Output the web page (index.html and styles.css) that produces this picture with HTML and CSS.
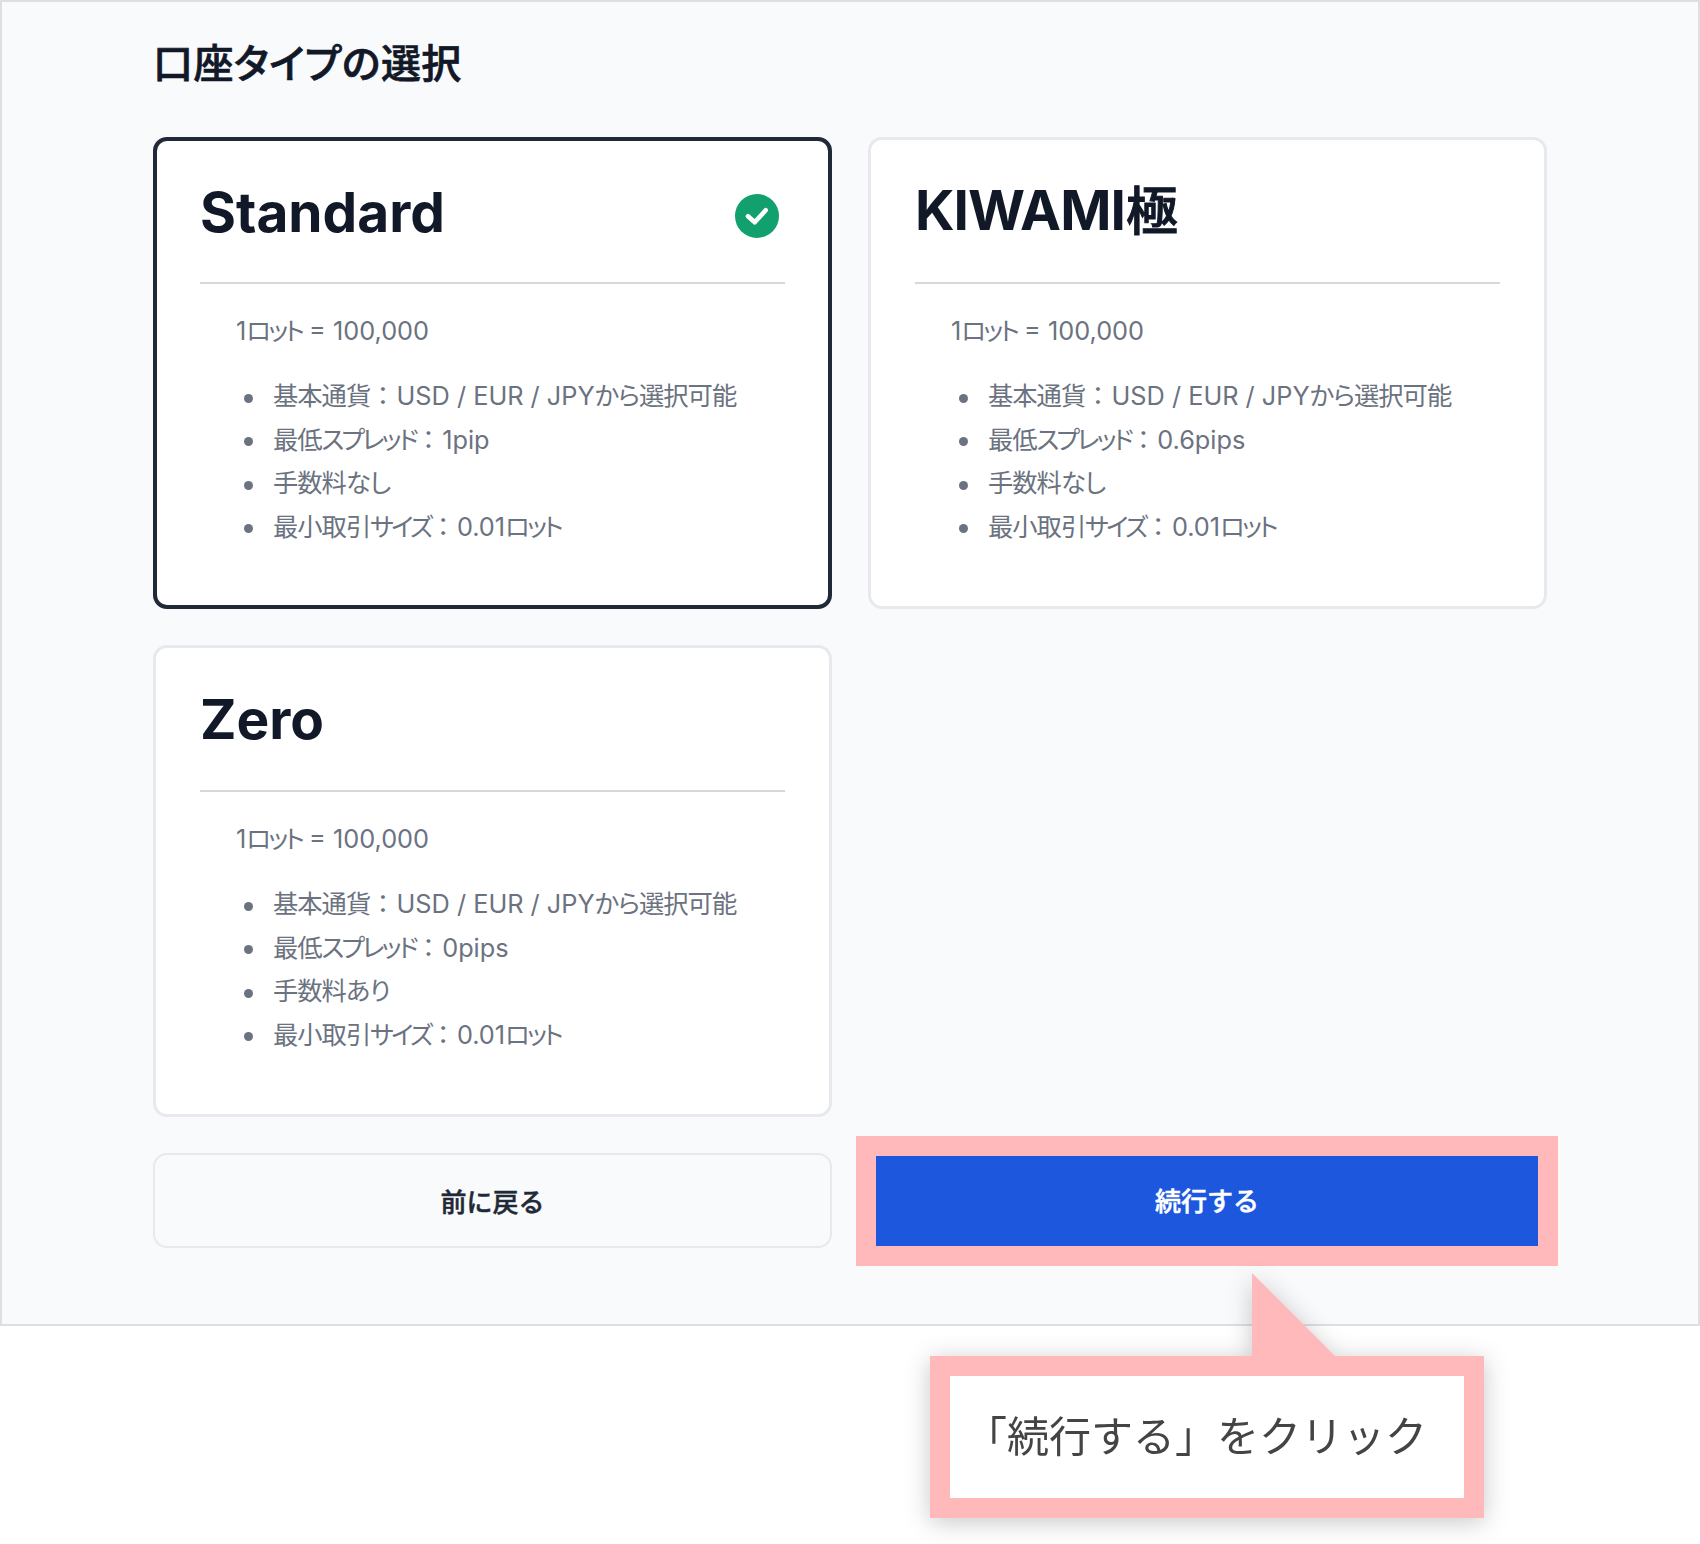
FILE: index.html
```html
<!DOCTYPE html>
<html lang="ja">
<head>
    <meta charset="UTF-8">
    <meta name="viewport" content="width=device-width, initial-scale=1.0">
    <title>口座タイプの選択</title>
    <link rel="stylesheet" href="styles.css">
</head>
<body>
    <div class="panel">
        <h1 class="page-title">口座タイプの選択</h1>

        <div class="card-grid">
            <div class="card selected">
                <div class="card-head">
                    <h2>Standard</h2>
                    <svg class="check" viewBox="0 0 44 44" width="44" height="44">
                        <circle cx="22" cy="22" r="22" fill="#11a06e"/>
                        <path d="M13 22.3L19.7 28.3L30.7 16.3" fill="none" stroke="#fff" stroke-width="4.6" stroke-linecap="round" stroke-linejoin="round"/>
                    </svg>
                </div>
                <p class="lot">1<span class="kana">ロット</span> = 100,000</p>
                <ul class="features">
                    <li><span class="jp">基本通貨</span><span class="colon">：</span>USD / EUR / JPY<span class="jp">から選択可能</span></li>
                    <li><span class="jp">最低</span><span class="kana">スプレッド</span><span class="colon">：</span>1pip</li>
                    <li><span class="jp">手数料なし</span></li>
                    <li><span class="jp">最小取引</span><span class="kana">サイズ</span><span class="colon">：</span>0.01<span class="kana">ロット</span></li>
                </ul>
            </div>

            <div class="card">
                <div class="card-head">
                    <h2 class="kiwami">KIWAMI<span>極</span></h2>
                </div>
                <p class="lot">1<span class="kana">ロット</span> = 100,000</p>
                <ul class="features">
                    <li><span class="jp">基本通貨</span><span class="colon">：</span>USD / EUR / JPY<span class="jp">から選択可能</span></li>
                    <li><span class="jp">最低</span><span class="kana">スプレッド</span><span class="colon">：</span>0.6pips</li>
                    <li><span class="jp">手数料なし</span></li>
                    <li><span class="jp">最小取引</span><span class="kana">サイズ</span><span class="colon">：</span>0.01<span class="kana">ロット</span></li>
                </ul>
            </div>

            <div class="card">
                <div class="card-head">
                    <h2>Zero</h2>
                </div>
                <p class="lot">1<span class="kana">ロット</span> = 100,000</p>
                <ul class="features">
                    <li><span class="jp">基本通貨</span><span class="colon">：</span>USD / EUR / JPY<span class="jp">から選択可能</span></li>
                    <li><span class="jp">最低</span><span class="kana">スプレッド</span><span class="colon">：</span>0pips</li>
                    <li><span class="jp">手数料あり</span></li>
                    <li><span class="jp">最小取引</span><span class="kana">サイズ</span><span class="colon">：</span>0.01<span class="kana">ロット</span></li>
                </ul>
            </div>

            <div class="card-empty"></div>

            <button class="btn back-btn">前に戻る</button>
            <button class="btn next-btn">続行する</button>
        </div>

        <div class="callout">
            <div class="callout-tail"></div>
            <div class="callout-box">「続行する」をクリック</div>
        </div>
    </div>
</body>
</html>
```

FILE: styles.css
```css
* {
    margin: 0;
    padding: 0;
    box-sizing: border-box;
}

body {
    font-family: Inter, "Noto Sans CJK JP", sans-serif;
    background: #fff;
    height: 1544px;
    overflow: hidden;
}

.panel {
    position: relative;
    height: 1326px;
    padding: 35px 151px 0;
    background: #f9fafb;
    border: 2px solid #dedfe1;
}

.page-title {
    height: 54px;
    margin-bottom: 46px;
    font-size: 40px;
    line-height: 54px;
    font-weight: 500;
    color: #111827;
    letter-spacing: 0.4px;
    font-feature-settings: "palt";
    -webkit-text-stroke: 0.7px #111827;
}

.card-grid {
    display: grid;
    grid-template-columns: 679px 679px;
    gap: 36px;
}

.card {
    height: 472px;
    padding: 0 44px;
    background: #fff;
    border: 3px solid #e8e9ec;
    border-radius: 14px;
}

.card.selected {
    padding: 0 43px;
    border: 4px solid #1f2937;
}

.card.selected .card-head {
    height: 143px;
}

.card-head {
    display: flex;
    justify-content: space-between;
    align-items: center;
    height: 144px;
    padding-right: 6px;
    border-bottom: 2px solid #d6d8dc;
}

.card-head h2 {
    font-size: 55px;
    line-height: 68px;
    font-weight: 700;
    color: #111827;
}

.kiwami {
    letter-spacing: -1px;
}

.kiwami span {
    margin-left: 1px;
    font-size: 52px;
    font-weight: 500;
    -webkit-text-stroke: 1px #111827;
}

.check {
    margin-top: 9px;
}

.lot {
    margin: 29px 0 0 36px;
    font-size: 25.3px;
    line-height: 36px;
    color: #6b7280;
}

.features {
    margin: 25px 0 0 73px;
    font-size: 25.3px;
    line-height: 43.5px;
    color: #6b7280;
    list-style: none;
}

/* the kana and kanji sit tighter than the latin text */
.jp {
    letter-spacing: -1px;
    font-feature-settings: "palt";
}

.kana {
    letter-spacing: -2.8px;
    font-feature-settings: "palt";
}

.colon {
    margin: 0 1px 0 0;
}

.features li::before {
    content: "";
    display: inline-block;
    width: 9px;
    height: 9px;
    margin-left: -29.5px;
    margin-right: 20.5px;
    border-radius: 50%;
    background: #6b7280;
    vertical-align: middle;
}

.btn {
    font-family: inherit;
    font-size: 26px;
    font-weight: 500;
    cursor: pointer;
}

.back-btn {
    height: 95px;
    background: #f9fafb;
    border: 2px solid #e8e9ec;
    border-radius: 14px;
    color: #1f2937;
    -webkit-text-stroke: 0.5px #1f2937;
}

.next-btn {
    height: 90px;
    margin: 3px 9px 0 8px;
    padding-bottom: 4px;
    background: #1c57dd;
    border: none;
    color: #fff;
    outline: 20px solid #ffb9bb;
    -webkit-text-stroke: 0.5px #fff;
}

.callout {
    position: absolute;
    left: 928px;
    top: 1271px;
    width: 554px;
    filter: drop-shadow(0 4px 12px rgba(0, 0, 0, 0.22));
}

.callout-tail {
    width: 84px;
    height: 84px;
    margin-left: 322px;
    margin-bottom: -1px;
    background: #ffb9bb;
    clip-path: polygon(0 0, 100% 100%, 0 100%);
}

.callout-box {
    height: 162px;
    padding-right: 22px;
    border: 20px solid #ffb9bb;
    background: #fff;
    font-size: 42px;
    font-weight: 400;
    line-height: 122px;
    text-align: center;
    color: #444;
}
```
